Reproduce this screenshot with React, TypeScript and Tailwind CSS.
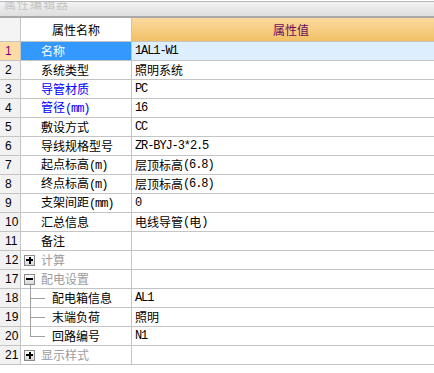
import React from 'react';

type Row = {
  no: number;
  name: string;
  value?: string;
  kind?: 'normal' | 'blue' | 'group' | 'child';
  expanded?: boolean;
  last?: boolean;
};

const ROWS: Row[] = [
  { no: 1, name: '名称', value: '1AL1-W1' },
  { no: 2, name: '系统类型', value: '照明系统' },
  { no: 3, name: '导管材质', value: 'PC', kind: 'blue' },
  { no: 4, name: '管径(mm)', value: '16', kind: 'blue' },
  { no: 5, name: '敷设方式', value: 'CC' },
  { no: 6, name: '导线规格型号', value: 'ZR-BYJ-3*2.5' },
  { no: 7, name: '起点标高(m)', value: '层顶标高(6.8)' },
  { no: 8, name: '终点标高(m)', value: '层顶标高(6.8)' },
  { no: 9, name: '支架间距(mm)', value: '0' },
  { no: 10, name: '汇总信息', value: '电线导管(电)' },
  { no: 11, name: '备注', value: '' },
  { no: 12, name: '计算', kind: 'group', expanded: false },
  { no: 17, name: '配电设置', kind: 'group', expanded: true },
  { no: 18, name: '配电箱信息', value: 'AL1', kind: 'child' },
  { no: 19, name: '末端负荷', value: '照明', kind: 'child' },
  { no: 20, name: '回路编号', value: 'N1', kind: 'child', last: true },
  { no: 21, name: '显示样式', kind: 'group', expanded: false },
];

// split text so latin runs get the narrow mono face, like the old SimSun grid
const MixedText: React.FC<{ text: string }> = ({ text }) => {
  const parts = text.match(/[\x00-\x7f]+|[^\x00-\x7f]+/g) || [];
  return (
    <>
      {parts.map((p, i) =>
        /^[\x00-\x7f]+$/.test(p) ? (
          <span key={i} className="font-['Liberation_Mono',monospace] text-[12px] tracking-[-1.1px]">
            {p}
          </span>
        ) : (
          <span key={i}>{p}</span>
        )
      )}
    </>
  );
};

const Expander: React.FC<{ open?: boolean }> = ({ open }) => (
  <div className="relative w-[11px] h-[11px] border border-[#8a8a8a] bg-gradient-to-b from-white to-[#d8d8d8] flex items-center justify-center">
    <div className="w-[7px] h-[2px] bg-black" />
    {!open && <div className="absolute w-[2px] h-[7px] bg-black" />}
  </div>
);

const App: React.FC = () => {
  return (
    <div className="w-[434px] h-[373px] bg-white overflow-hidden font-['Noto_Sans_CJK_SC',sans-serif] text-[12px] text-black">
      {/* title strip */}
      <div className="pt-px">
        <div className="h-[17px] border-t border-[#b8b8b8] border-b-2 border-b-[#a9a9a9] bg-gradient-to-b from-[#f2f2f2] to-[#dedede] overflow-hidden">
          <div className="mt-[-5px] pl-[4px] text-[12px] leading-[14px] text-[#c4c4c4] tracking-[1px]">属性编辑器</div>
        </div>
      </div>

      {/* header */}
      <div className="flex h-[24px] border-b border-[#c4c4c4]">
        <div className="w-[21px] border-r border-[#c4c4c4] bg-[#f4f4f4]" />
        <div className="w-[111px] border-r border-[#c4c4c4] bg-white flex items-center justify-center text-[12px]">
          属性名称
        </div>
        <div className="flex-1 bg-gradient-to-b from-[#fad99f] to-[#f2c165] flex items-center pl-[141px] text-[#6b0a5f]">
          属性值
        </div>
      </div>

      {ROWS.map((r, idx) => {
        const selected = idx === 0;
        const nameColor =
          selected ? 'text-white' : r.kind === 'blue' ? 'text-[#0000ff]' : r.kind === 'group' ? 'text-[#9c9c9c]' : 'text-black';
        return (
          <div key={r.no} className="flex h-[19px] border-b border-[#c4c4c4]">
            <div
              className={`w-[21px] border-r border-[#c4c4c4] flex items-center pl-[5px] font-['Liberation_Sans',sans-serif] text-[12px] ${
                selected ? 'bg-[#fcdba4] text-[#800080]' : 'bg-[#f2f2f2] text-black'
              }`}
            >
              {r.no}
            </div>
            <div
              className={`relative w-[111px] border-r border-[#c4c4c4] flex items-center ${nameColor} ${
                selected ? 'bg-[#3399ff]' : 'bg-white'
              }`}
            >
              {r.kind === 'group' && (
                <>
                  <div className="ml-[3px] mr-[6px]">
                    <Expander open={r.expanded} />
                  </div>
                  {r.expanded && <div className="absolute left-[9px] top-[15px] bottom-[-1px] w-px bg-[#a0a0a0]" />}
                </>
              )}
              {r.kind === 'child' && (
                <>
                  <div
                    className={`absolute left-[9px] top-[-1px] w-px bg-[#a0a0a0] ${r.last ? 'h-[10px]' : 'bottom-[-1px]'}`}
                  />
                  <div className="absolute left-[9px] top-[9px] w-[15px] h-px bg-[#a0a0a0]" />
                </>
              )}
              <span className={r.kind === 'child' ? 'pl-[31px]' : r.kind === 'group' ? '' : 'pl-[20px]'}>
                <MixedText text={r.name} />
              </span>
            </div>
            <div className={`flex-1 flex items-center pl-[3px] ${selected ? 'bg-[#ddeeff]' : 'bg-white'}`}>
              {r.value ? <MixedText text={r.value} /> : null}
            </div>
          </div>
        );
      })}
    </div>
  );
};

export default App;
